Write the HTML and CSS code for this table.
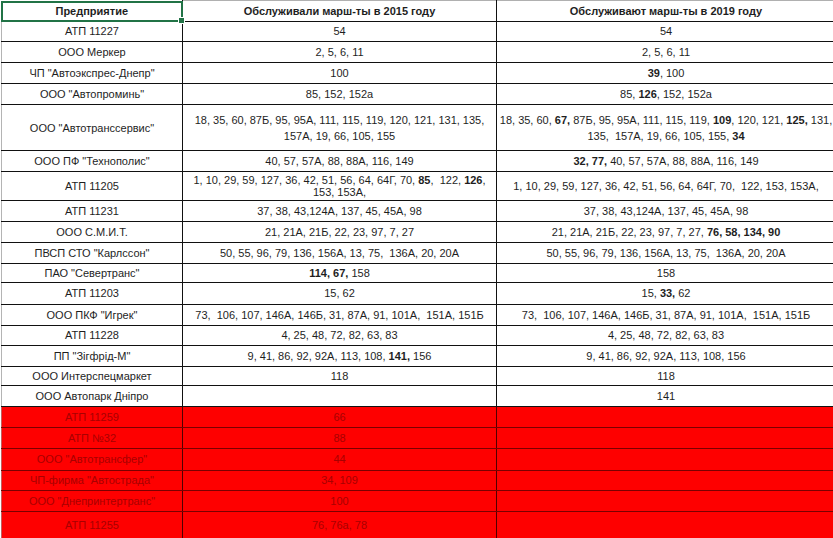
FILE: index.html
```html
<!DOCTYPE html>
<html lang="ru">
<head>
<meta charset="utf-8">
<title>Предприятия и маршруты</title>
<link rel="stylesheet" href="styles.css">
</head>
<body>
<table class="sheet">
<colgroup><col class="c1"><col class="c2"><col class="c3"></colgroup>
<tr class="head h21"><th class="sel"><div class="selbox">Предприятие<span class="handle"></span></div></th><th>Обслуживали марш-ты в 2015 году</th><th>Обслуживают марш-ты в 2019 году</th></tr>
<tr class="h20"><td>АТП 11227</td><td>54</td><td>54</td></tr>
<tr class="h21"><td>ООО Меркер</td><td>2, 5, 6, 11</td><td>2, 5, 6, 11</td></tr>
<tr class="h21"><td>ЧП "Автоэкспрес-Днепр"</td><td>100</td><td><b>39</b>, 100</td></tr>
<tr class="h21"><td>ООО "Автопроминь"</td><td>85, 152, 152а</td><td>85, <b>126</b>, 152, 152а</td></tr>
<tr class="h46 tall"><td>ООО "Автотранссервис"</td><td>18, 35, 60, 87Б, 95, 95А, 111, 115, 119, 120, 121, 131, 135,<br>157А, 19, 66, 105, 155</td><td>18, 35, 60, <b>67,</b> 87Б, 95, 95А, 111, 115, 119, <b>109</b>, 120, 121, <b>125,</b> 131,<br>135,  157А, 19, 66, 105, 155, <b>34</b></td></tr>
<tr class="h21"><td>ООО ПФ "Технополис"</td><td>40, 57, 57А, 88, 88А, 116, 149</td><td><b>32, 77,</b> 40, 57, 57А, 88, 88А, 116, 149</td></tr>
<tr class="h29 tight"><td>АТП 11205</td><td>1, 10, 29, 59, 127, 36, 42, 51, 56, 64, 64Г, 70, <b>85</b>,  122, <b>126</b>,<br>153, 153А,</td><td>1, 10, 29, 59, 127, 36, 42, 51, 56, 64, 64Г, 70,  122, 153, 153А,</td></tr>
<tr class="h21"><td>АТП 11231</td><td>37, 38, 43,124А, 137, 45, 45А, 98</td><td>37, 38, 43,124А, 137, 45, 45А, 98</td></tr>
<tr class="h21"><td>ООО С.М.И.Т.</td><td>21, 21А, 21Б, 22, 23, 97, 7, 27</td><td>21, 21А, 21Б, 22, 23, 97, 7, 27, <b>76, 58, 134, 90</b></td></tr>
<tr class="h21"><td>ПВСП СТО "Карлссон"</td><td>50, 55, 96, 79, 136, 156А, 13, 75,  136А, 20, 20А</td><td>50, 55, 96, 79, 136, 156А, 13, 75,  136А, 20, 20А</td></tr>
<tr class="h19"><td>ПАО "Севертранс"</td><td><b>114, 67,</b> 158</td><td>158</td></tr>
<tr class="h22"><td>АТП 11203</td><td>15, 62</td><td>15, <b>33,</b> 62</td></tr>
<tr class="h21"><td>ООО ПКФ "Игрек"</td><td>73,  106, 107, 146А, 146Б, 31, 87А, 91, 101А,  151А, 151Б</td><td>73,  106, 107, 146А, 146Б, 31, 87А, 91, 101А,  151А, 151Б</td></tr>
<tr class="h20"><td>АТП 11228</td><td>4, 25, 48, 72, 82, 63, 83</td><td>4, 25, 48, 72, 82, 63, 83</td></tr>
<tr class="h21"><td>ПП "Зігфрід-М"</td><td>9, 41, 86, 92, 92А, 113, 108, <b>141,</b> 156</td><td>9, 41, 86, 92, 92А, 113, 108, 156</td></tr>
<tr class="h19"><td>ООО Интерспецмаркет</td><td>118</td><td>118</td></tr>
<tr class="h21"><td>ООО Автопарк Дніпро</td><td></td><td>141</td></tr>
<tr class="h21 red first"><td>АТП 11259</td><td>66</td><td></td></tr>
<tr class="h21 red"><td>АТП №32</td><td>88</td><td></td></tr>
<tr class="h22 red"><td>ООО "Автотрансфер"</td><td>44</td><td></td></tr>
<tr class="h20 red"><td>ЧП-фирма "Автострада"</td><td>34, 109</td><td></td></tr>
<tr class="h21 red"><td>ООО "Днепринтертранс"</td><td>100</td><td></td></tr>
<tr class="h27 red"><td>АТП 11255</td><td>76, 76а, 78</td><td></td></tr>
</table>
</body>
</html>
```

FILE: styles.css
```css
html, body {
  margin: 0;
  padding: 0;
  background: #ffffff;
}
body {
  font-family: "Liberation Sans", Arial, sans-serif;
  font-size: 11px;
  color: #1e1e1e;
  overflow: hidden;
}
.sheet {
  border-collapse: collapse;
  table-layout: fixed;
  width: 834px;
  margin-left: 1px;
}
.c1 { width: 181px; }
.c2 { width: 314px; }
.c3 { width: 339px; }

.sheet td, .sheet th {
  border: 1px solid #111111;
  padding: 0 2px;
  text-align: center;
  vertical-align: middle;
  white-space: pre;
  line-height: 13px;
  overflow: hidden;
}
.sheet td:first-child, .sheet th:first-child {
  border-left: 1px solid #b4b4b4;
}
.sheet th {
  font-weight: bold;
  border-top: 1px solid #b0b0b0;
}
.sheet th.sel {
  padding: 0;
  position: relative;
  overflow: visible;
  border-top: none;
  border-left: none;
}
.selbox {
  position: absolute;
  left: -1px;
  top: 0;
  right: -1px;
  bottom: -1px;
  border: 2px solid #217346;
  display: flex;
  align-items: center;
  justify-content: center;
  z-index: 2;
}
.handle {
  position: absolute;
  right: -4px;
  bottom: -4px;
  width: 5px;
  height: 5px;
  background: #217346;
  border: 1px solid #ffffff;
}
b { font-weight: bold; }

.h19 { height: 19px; }
.h20 { height: 20px; }
.h21 { height: 21px; }
.h22 { height: 22px; }
.h27 { height: 27px; }
.h29 { height: 29px; }
.h46 { height: 46px; }
.tall td { line-height: 16px; }
.tight td { line-height: 12px; }

.red td {
  background: #fe0000;
  color: #a80000;
  border-top-color: #7a0000;
  border-bottom-color: #7a0000;
  border-right-color: #500000;
}
.red td:first-child {
  border-left-color: #c06060;
}
.red.first td {
  border-top-color: #3a0000;
}
```
